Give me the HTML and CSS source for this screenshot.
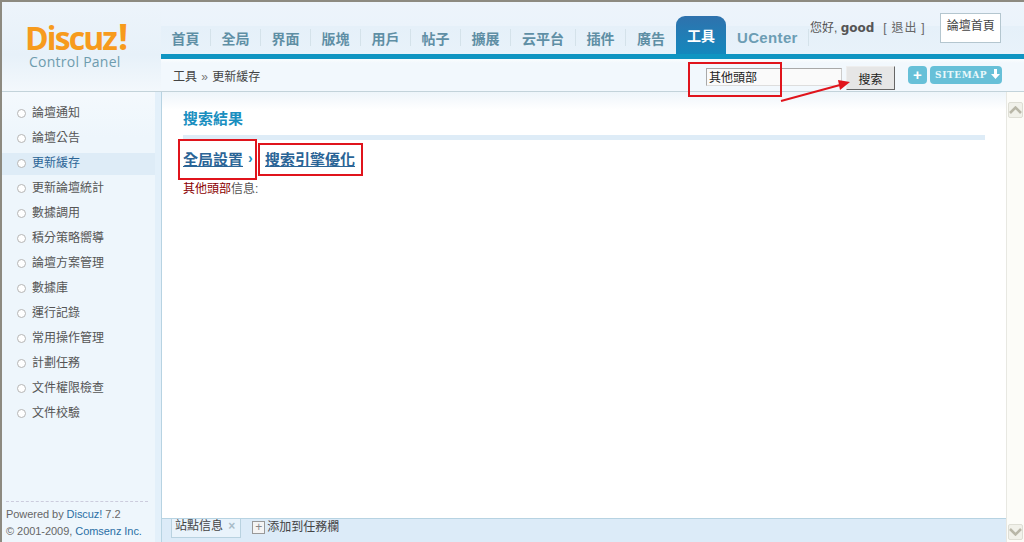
FILE: index.html
```html
<!DOCTYPE html>
<html lang="zh-Hant">
<head>
<meta charset="utf-8">
<title>Discuz! Control Panel</title>
<link rel="stylesheet" href="styles.css">
</head>
<body>
<div class="page">
  <header class="header">
    <div class="brand">
      <div class="logo">Discuz<span class="bang">!</span></div>
      <div class="cp">Control Panel</div>
    </div>
    <div class="head-main">
      <div class="topbar">
        <nav class="nav">
          <a class="nav-item">首頁</a>
          <a class="nav-item">全局</a>
          <a class="nav-item">界面</a>
          <a class="nav-item">版塊</a>
          <a class="nav-item">用戶</a>
          <a class="nav-item">帖子</a>
          <a class="nav-item">擴展</a>
          <a class="nav-item wide">云平台</a>
          <a class="nav-item">插件</a>
          <a class="nav-item last">廣告</a>
          <a class="nav-active">工具</a>
          <a class="nav-uc">UCenter</a>
        </nav>
        <div class="user">
          <span class="hello">您好, <b>good</b></span>
          <span class="logout">[ 退出 ]</span>
          <span class="home-btn">論壇首頁</span>
        </div>
      </div>
      <div class="subbar">
        <div class="crumb">工具 <span class="raquo">»</span> 更新緩存</div>
        <div class="tools">
          <input class="search" type="text" value="其他頭部">
          <button class="search-btn" type="button">搜索</button>
          <span class="plus">+</span>
          <span class="sitemap">SITEMAP <svg class="down" width="9" height="10" viewBox="0 0 9 10"><path d="M3 0h3v5h3L4.500 10 0 5h3z" fill="#fff"/></svg></span>
        </div>
      </div>
    </div>
  </header>
  <div class="body">
    <aside class="side">
      <ul class="menu">
        <li class="menu-item">論壇通知</li>
        <li class="menu-item">論壇公告</li>
        <li class="menu-item on">更新緩存</li>
        <li class="menu-item">更新論壇統計</li>
        <li class="menu-item">數據調用</li>
        <li class="menu-item">積分策略嚮導</li>
        <li class="menu-item">論壇方案管理</li>
        <li class="menu-item">數據庫</li>
        <li class="menu-item">運行記錄</li>
        <li class="menu-item">常用操作管理</li>
        <li class="menu-item">計劃任務</li>
        <li class="menu-item">文件權限檢查</li>
        <li class="menu-item">文件校驗</li>
      </ul>
      <div class="copy">
        <div>Powered by <a class="lnk">Discuz!</a> 7.2</div>
        <div>© 2001-2009, <a class="lnk">Comsenz Inc.</a></div>
      </div>
    </aside>
    <div class="content">
      <div class="column">
        <main class="main">
          <h1 class="title">搜索結果</h1>
          <div class="path"><a class="plink">全局設置</a><span class="sep">›</span><a class="plink">搜索引擎優化</a></div>
          <p class="info"><em class="hit">其他頭部</em>信息:</p>
        </main>
        <div class="taskbar">
          <span class="task">站點信息 <span class="x">×</span></span>
          <span class="add"><span class="addbox">+</span>添加到任務欄</span>
        </div>
      </div>
      <div class="scroll">
        <span class="sb-btn"><svg width="13" height="8" viewBox="0 0 13 8"><path d="M1 7l5.500-5.500L12 7" fill="none" stroke="#b9b7a8" stroke-width="2.500"/></svg></span>
        <span class="sb-btn"><svg width="13" height="8" viewBox="0 0 13 8"><path d="M1 1l5.500 5.500L12 1" fill="none" stroke="#b9b7a8" stroke-width="2.500"/></svg></span>
      </div>
    </div>
  </div>
  <div class="mark m1"></div>
  <div class="mark m2"></div>
  <div class="mark m3"></div>
  <svg class="arrow" width="76" height="36" viewBox="0 0 76 36"><path d="M1 34L60 18" stroke="#e0141c" stroke-width="2" fill="none"/><path d="M70 15L58 13l2 10z" fill="#e0141c"/></svg>
</div>
</body>
</html>
```
FILE: styles.css
```css
* { box-sizing: border-box; }
html, body { margin: 0; padding: 0; height: 100%; overflow: hidden; }
body { font: 12px/1.4 "Liberation Sans", "Noto Sans CJK TC", sans-serif; color: #555; background: #fff; }
ul, h1, p { margin: 0; padding: 0; }
.page { position: relative; width: 1024px; height: 542px; display: flex; flex-direction: column; border-top: 2px solid #8d8a80; border-left: 2px solid #8d8a80; background: #eaf3fb; }

.header { height: 90px; display: flex; border-bottom: 1px solid #c3d3da; flex: none; }
.brand { width: 159px; flex: none; padding: 20px 0 0 23px; background: linear-gradient(#edf4fb, #e7f1f9 60%, #f3f8fc); }
.logo { font: bold 32px/30px "Open Sans", "Liberation Sans", sans-serif; color: #f79b1d; letter-spacing: -1.900px; white-space: nowrap; }
.bang { font-size: 36px; margin-left: 2px; }
.cp { font: 14px/16px "Open Sans", "Liberation Sans", sans-serif; color: #6e9cae; margin: 1px 0 0 4px; letter-spacing: .25px; }

.head-main { flex: 1; display: flex; flex-direction: column; }
.topbar { height: 57px; display: flex; justify-content: space-between; border-bottom: 5px solid #0f95c2; background: linear-gradient(#edf4fb 0, #ebf3fb 24px, #e5f0f9 24px, #e8f2fa 100%); }
.nav { display: flex; align-items: flex-end; }
.nav-item { width: 50px; height: 17px; margin-bottom: 8px; display: flex; align-items: center; justify-content: center; font: bold 14px/18px "Noto Sans CJK TC", sans-serif; color: #5f8fa5; border-right: 1px solid #d4e2ea; }
.nav-item.wide { width: 65px; }
.nav-item.last { border-right: 0; }
.nav-active { width: 50px; height: 38px; padding-top: 9px; text-align: center; border-radius: 9px 9px 0 0; background: linear-gradient(#2f72ad, #1488bd); color: #fff; font: bold 14px/20px "Noto Sans CJK TC", sans-serif; }
.nav-uc { width: 83px; height: 17px; margin-bottom: 8px; padding-left: 11px; font: bold 15px/17px "Liberation Sans", sans-serif; color: #6c9db4; border-right: 1px solid #d4e2ea; letter-spacing: .35px; }
.user { display: flex; align-items: flex-start; padding: 11px 23px 0 0; width: 214px; white-space: nowrap; color: #555; }
.hello { line-height: 17px; margin-top: 7px; }
.hello b { font-family: "DejaVu Sans", sans-serif; font-size: 12px; color: #555; }
.logout { margin: 7px 0 0 9px; line-height: 17px; letter-spacing: .8px; color: #666; }
.home-btn { margin: 0 0 0 15px; width: 61px; height: 30px; border: 1px solid #b4c6cf; background: #fff; text-align: center; line-height: 25px; color: #444; }

.subbar { height: 32px; display: flex; justify-content: space-between; background: linear-gradient(#fbfdfe 0, #f2f8fd 4px); padding-left: 12px; }
.crumb { line-height: 36px; color: #444; }
.raquo { color: #777; margin: 0 1px; }
.tools { display: flex; align-items: flex-start; padding: 5px 22px 0 0; }
.search { width: 136px; height: 18px; margin-top: 4px; padding: 0 0 2px 2px; border: 1px solid #a9a9a9; border-right-color: #ccc; border-bottom-color: #ddd; background: #fafafa; font: 12px "Liberation Sans", "Noto Sans CJK TC", sans-serif; color: #222; }
.search-btn { width: 49px; height: 24px; margin: 2px 13px 0 4px; padding: 0; border: 1px solid; border-color: #eee #666 #666 #eee; background: #e6e6e6; font: 12px "Liberation Sans", "Noto Sans CJK TC", sans-serif; color: #222; }
.plus { width: 19px; height: 18px; margin: 2px 3px 0 0; border-radius: 4px; background: #67c0d8; color: #fff; font: bold 15px/17px "Liberation Sans", sans-serif; text-align: center; }
.sitemap { width: 72px; height: 18px; margin-top: 2px; padding-left: 3px; border-radius: 4px; background: #67c0d8; color: #e9f8fb; font: bold 9px/18px "DejaVu Serif", serif; letter-spacing: .6px; text-align: center; white-space: nowrap; }
.down { vertical-align: -1px; }

.body { flex: 1; display: flex; min-height: 0; }
.side { width: 159px; flex: none; display: flex; flex-direction: column; justify-content: space-between; background: linear-gradient(#f4f9fd, #eef6fc 10%); border-right: 6px solid #e3f0fa; }
.menu { list-style: none; padding-top: 9px; }
.menu-item { height: 25px; line-height: 25px; padding-left: 30px; color: #555; position: relative; }
.menu-item::before { content: ""; position: absolute; left: 15px; top: 8px; width: 7px; height: 7px; border: 1px solid #b5b5b5; border-radius: 50%; background: #fff; }
.menu-item.on { background: #deecf7; color: #2a6496; height: 22px; line-height: 21px; margin: 2px 0 1px; }
.menu-item.on::before { top: 6px; }
.copy { margin: 0 7px 2px 4px; padding-top: 4px; border-top: 1px dashed #ccd; font: 11px/17px "Liberation Sans", sans-serif; color: #666; letter-spacing: -.05px; }
.lnk { color: #2a6fa5; }

.content { flex: 1; display: flex; border-left: 1px solid #b7d3e2; min-width: 0; }
.column { flex: 1; display: flex; flex-direction: column; min-width: 0; }
.main { flex: 1; min-height: 0; padding: 0 21px; background: linear-gradient(#eef5fa, #fff 18px); }
.title { height: 48px; border-bottom: 5px solid #deecf7; font: bold 15px/51px "Noto Sans CJK TC", sans-serif; color: #1a8fc0; width: 802px; }
.path { display: flex; align-items: center; height: 38px; }
.plink { font: bold 15px/20px "Noto Sans CJK TC", sans-serif; color: #2a6496; text-decoration: underline; }
.sep { width: 22px; padding-left: 5px; color: #1a8fc0; font-weight: bold; font-size: 14px; }
.info { line-height: 17px; color: #555; margin-top: 3px; }
.hit { font-style: normal; color: #8b0000; }
.scroll { width: 18px; flex: none; padding: 10px 0 2px; display: flex; flex-direction: column; justify-content: space-between; background: #fcfcf8; border-left: 1px solid #e8e8e2; }
.sb-btn { width: 15px; height: 16px; margin-left: 1px; display: flex; align-items: center; justify-content: center; background: #f1f1ea; border: 1px solid #deded5; border-radius: 2px; }
.taskbar { height: 24px; flex: none; display: flex; align-items: flex-start; background: #dcebf8; border-top: 1px solid #b7d3e2; padding-left: 9px; }
.task { height: 19px; padding: 0 5px 0 3px; line-height: 15px; background: #e9f3fb; border: 1px solid #b9d2e0; border-top: 0; color: #444; }
.x { color: #a9bcc8; font-weight: bold; margin-left: 2px; }
.add { display: flex; align-items: center; margin-left: 11px; height: 17px; color: #444; }
.addbox { width: 13px; height: 13px; margin-right: 2px; border: 1px solid #999; background: #f4f4f4; color: #888; font: 12px/10px "Liberation Sans", sans-serif; text-align: center; }

.mark { position: absolute; border: 2px solid #e0141c; }
.m1 { left: 686px; top: 60px; width: 94px; height: 35px; }
.m2 { left: 176px; top: 137px; width: 79px; height: 41px; }
.m3 { left: 256px; top: 141px; width: 105px; height: 33px; }
.arrow { position: absolute; left: 778px; top: 65px; }
```
